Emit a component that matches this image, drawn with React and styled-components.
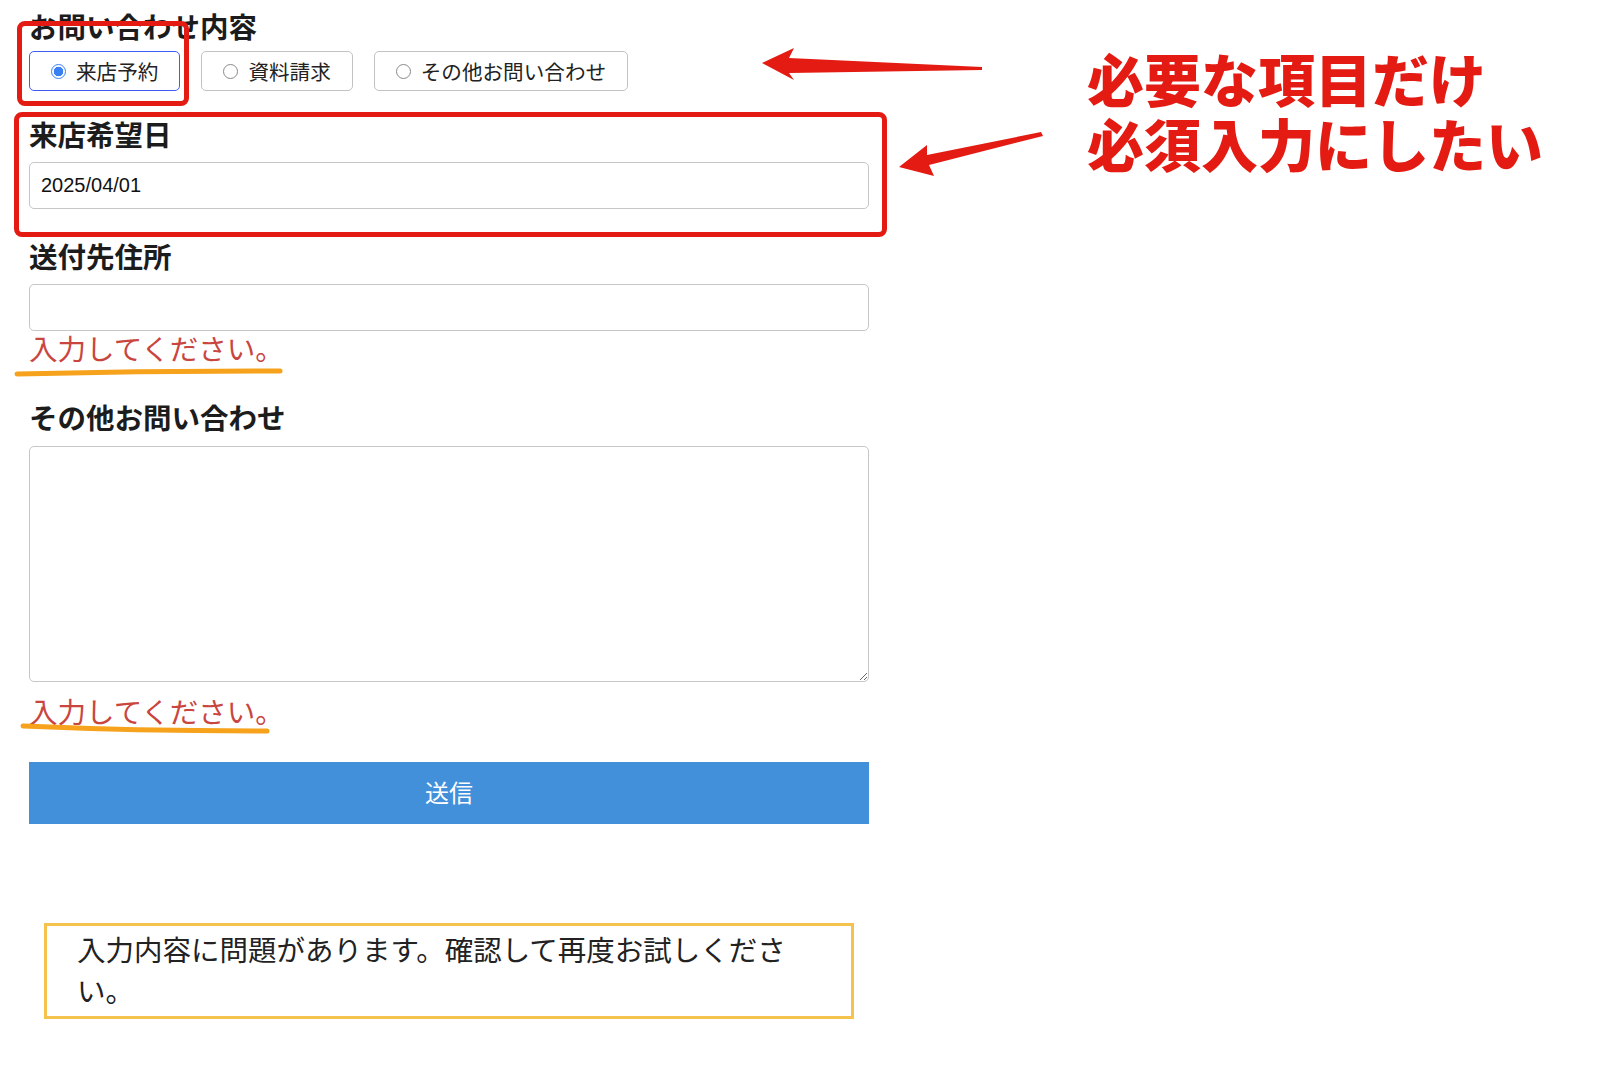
import React from "react";
import styled, { createGlobalStyle } from "styled-components";

const jp = `"Noto Sans CJK JP", "Liberation Sans", sans-serif`;
const markRed = "#e31b12";

const GlobalStyle = createGlobalStyle`
  html, body {
    margin: 0;
    padding: 0;
    background: #ffffff;
  }
  body {
    font-family: ${jp};
    color: #1a1a1a;
  }
  * {
    box-sizing: border-box;
  }
`;

const Page = styled.div`
  position: relative;
  width: 1600px;
  height: 1083px;
  overflow: hidden;
`;

const Form = styled.form`
  display: flex;
  flex-direction: column;
  width: 869px;
  padding: 12px 0 0 29px;
`;

const Label = styled.div`
  font-size: 28.5px;
  font-weight: 700;
  line-height: 28px;
  margin-top: ${p => p.$top || 0}px;
  color: #1c1c1c;
`;

const RadioRow = styled.div`
  display: flex;
  gap: 21px;
  margin-top: 11px;
`;

const RadioBox = styled.label`
  display: flex;
  align-items: center;
  gap: 10px;
  height: 40px;
  padding: 0 21px 0 21px;
  border: 1.5px solid ${p => (p.$active ? "#3d5cf5" : "#c2c2c2")};
  border-radius: 5px;
  font-size: 20.6px;
  line-height: 20px;
  color: #222;
  background: #fff;
`;

const RadioDot = styled.span`
  width: 15px;
  height: 15px;
  border-radius: 50%;
  flex: none;
  border: ${p => (p.$checked ? "1.5px solid #3a80f3" : "1px solid #8a8a8a")};
  background: ${p =>
    p.$checked
      ? "radial-gradient(circle, #3a80f3 0 4.5px, #ffffff 5.1px)"
      : "#ffffff"};
`;

const TextInput = styled.input`
  height: 47px;
  margin-top: ${p => p.$top || 0}px;
  width: 840px;
  padding: 0 11px;
  border: 1.5px solid #c6c6c6;
  border-radius: 5px;
  font-family: "Liberation Sans", "Noto Sans CJK JP", sans-serif;
  font-size: 20px;
  color: #111;
  outline: none;
  background: #fff;
`;

const TextArea = styled.textarea`
  display: block;
  height: 236px;
  width: 840px;
  margin-top: 15px;
  padding: 10px 11px;
  border: 1.5px solid #c6c6c6;
  border-radius: 5px;
  font-family: ${jp};
  font-size: 20px;
  resize: vertical;
  outline: none;
`;

const ErrorText = styled.div`
  margin-top: ${p => p.$top}px;
  font-size: 28.5px;
  line-height: 28px;
  color: #c9463f;
`;

const SubmitButton = styled.button`
  margin-top: 37px;
  width: 840px;
  height: 62px;
  border: none;
  border-radius: 0;
  background: #4290da;
  color: #ffffff;
  font-family: ${jp};
  font-size: 24px;
  padding: 0 0 4px;
`;

const AlertBox = styled.div`
  margin: 99px 0 0 15px;
  width: 810px;
  height: 96px;
  padding: 2px 54px 5px 30px;
  border: 3px solid #f5c24d;
  font-size: 28.5px;
  line-height: 41px;
  color: #222;
`;

/* annotation layer drawn over the screenshot */

const RedFrame = styled.div`
  position: absolute;
  left: ${p => p.$x}px;
  top: ${p => p.$y}px;
  width: ${p => p.$w}px;
  height: ${p => p.$h}px;
  border: 5px solid ${markRed};
  border-radius: 8px;
  pointer-events: none;
`;

const Note = styled.div`
  position: absolute;
  left: 1087px;
  top: 45px;
  display: flex;
  flex-direction: column;
  color: ${markRed};
  white-space: nowrap;
`;

const NoteLine = styled.div`
  font-size: 57px;
  font-weight: 900;
  line-height: 65px;
  height: 65px;
`;

const Marks = styled.svg`
  position: absolute;
  left: 0;
  top: 0;
  pointer-events: none;
`;

const options = [
  { label: "来店予約", checked: true },
  { label: "資料請求" },
  { label: "その他お問い合わせ" },
];

export default function App() {
  return (
    <Page>
      <GlobalStyle />
      <Form onSubmit={e => e.preventDefault()}>
        <Label>お問い合わせ内容</Label>
        <RadioRow>
          {options.map(o => (
            <RadioBox key={o.label} $active={o.checked}>
              <RadioDot $checked={o.checked} />
              {o.label}
            </RadioBox>
          ))}
        </RadioRow>

        <Label $top={29}>来店希望日</Label>
        <TextInput $top={14} defaultValue="2025/04/01" />

        <Label $top={33}>送付先住所</Label>
        <TextInput $top={14} />
        <ErrorText $top={3}>入力してください。</ErrorText>

        <Label $top={41}>その他お問い合わせ</Label>
        <TextArea />
        <ErrorText $top={15}>入力してください。</ErrorText>

        <SubmitButton type="submit">送信</SubmitButton>

        <AlertBox>入力内容に問題があります。確認して再度お試しください。</AlertBox>
      </Form>

      <RedFrame $x={17} $y={21} $w={172} $h={85} />
      <RedFrame $x={14} $y={112} $w={873} $h={125} />

      <Marks width="1600" height="1083" viewBox="0 0 1600 1083">
        <polygon
          fill={markRed}
          points="762,63 794,48 789,58 982,67 982,70 789,73 794,80"
        />
        <polygon
          fill={markRed}
          points="899,167 927,145 927,155 1041,132 1043,136 929,165 934,176"
        />
        <path
          d="M17 374 Q150 371 280 371"
          stroke="#f6a21c"
          strokeWidth="5"
          strokeLinecap="round"
          fill="none"
        />
        <path
          d="M23 726 Q140 731 267 731"
          stroke="#f6a21c"
          strokeWidth="5"
          strokeLinecap="round"
          fill="none"
        />
      </Marks>

      <Note>
        <NoteLine>必要な項目だけ</NoteLine>
        <NoteLine>必須入力にしたい</NoteLine>
      </Note>
    </Page>
  );
}
